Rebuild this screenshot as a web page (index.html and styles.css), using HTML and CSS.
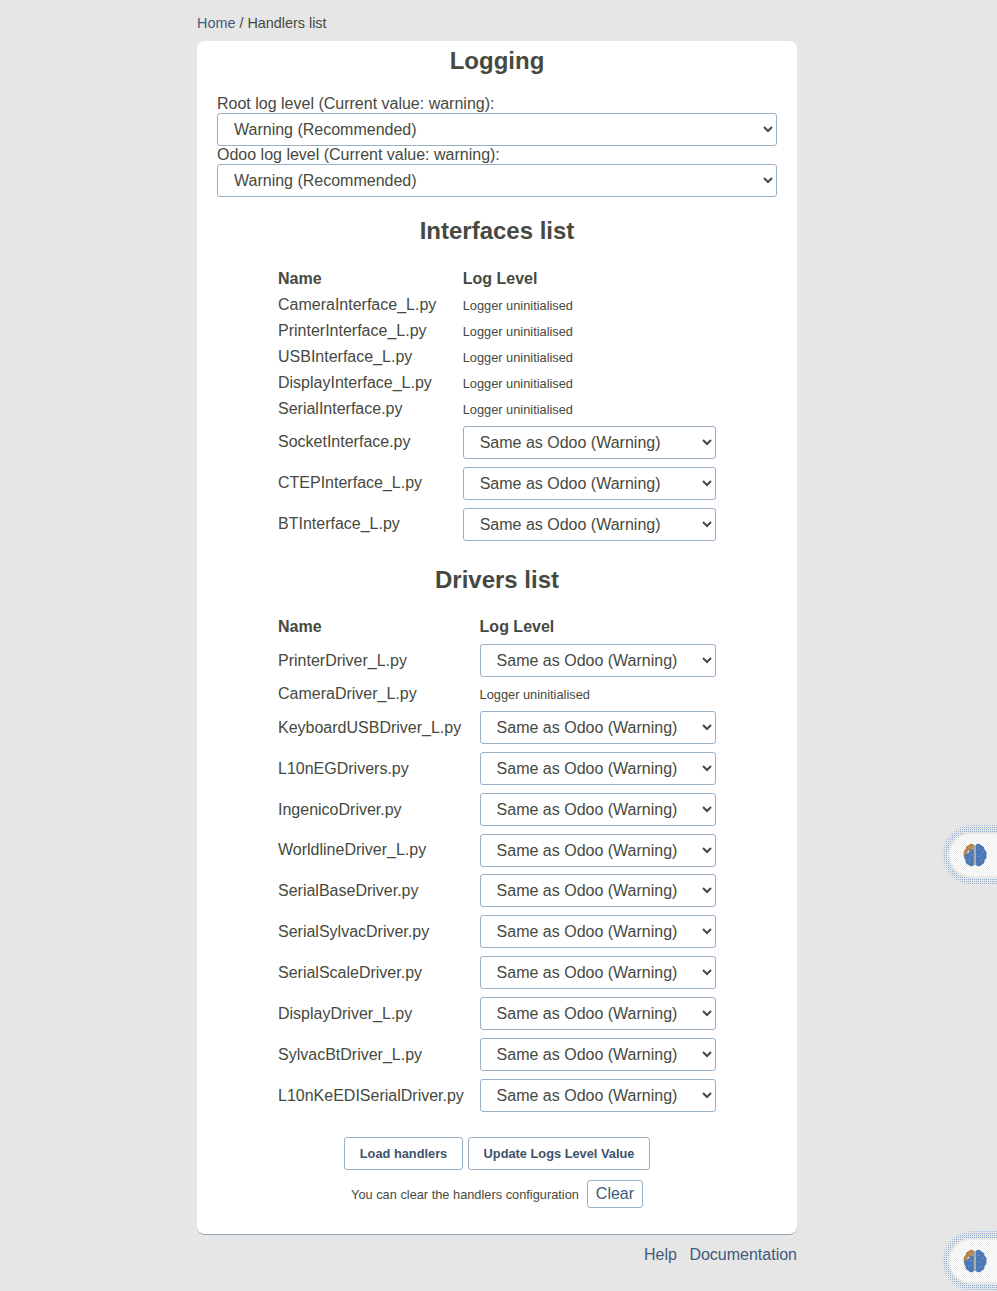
FILE: index.html
```
<!DOCTYPE html>
<html lang="en">
<head>
<meta charset="utf-8">
<title>Handlers list</title>
<link rel="stylesheet" href="styles.css">
</head>
<body>
<div class="page">
  <nav class="breadcrumb"><a href="#">Home</a> / Handlers list</nav>
  <main class="card">
    <h2 class="title">Logging</h2>
    <div class="field"><label for="root">Root log level (Current value: warning):</label><select id="root"><option>Warning (Recommended)</option></select></div>
    <div class="field"><label for="odoo">Odoo log level (Current value: warning):</label><select id="odoo"><option>Warning (Recommended)</option></select></div>
    <h2 class="title interfaces-title">Interfaces list</h2>
    <div class="list interfaces" id="interfaces"></div>
    <h2 class="title drivers-title">Drivers list</h2>
    <div class="list drivers" id="drivers"></div>
    <div class="actions"><button class="btn">Load handlers</button><button class="btn update">Update Logs Level Value</button></div>
    <div class="clear-row"><span>You can clear the handlers configuration</span><a class="clear" href="#">Clear</a></div>
  </main>
  <footer class="footer"><a href="#">Help</a><a href="#">Documentation</a></footer>
</div>
<svg class="defs" width="0" height="0" aria-hidden="true">
  <symbol id="brain" viewBox="0 0 24 24">
    <path fill="#b4814b" d="M10.800 1.700C9 .2 6.400.8 5.500 2.600 3.300 2.600 2.400 4.600 2.900 6 .8 7.200.2 9.500.8 11.300c-.4 1-.2 2 .5 2.800L4 12l1-4 3-1 3-3z"/>
    <path fill="#4c79b5" d="M10.900 3.500 10 6 6.500 7.300 5.300 10 1.300 12.600C.8 15 1.700 16.500 2.600 17.200 2 19.500 4 21.700 5.600 21.700 7 24 10 23.600 10.900 21.700z"/>
    <path fill="#4c79b5" d="M12.900 1.700c2-1.600 4.600-.7 5.400 1 2.200.2 3.500 2 3 3.700 2 1 3 3.600 2 5.500.8 2 0 4-1.800 5.100.3 2.400-1 4.300-3 4.700-1.200 2-4 2-5.600.3z"/>
    <path fill="#a3aaa9" d="M10.900 2h2v20h-2z"/>
    <path fill="none" stroke="#a7b8c9" stroke-width=".8" stroke-dasharray="1 1" d="M5 10 8 8.500M6.500 13 9 11M5.500 18l2-2M15 6l2 1.300M18 10l3-1.500M15 14l2-1.500M18 17l1.500 1"/>
    <path fill="none" stroke="#e0c19b" stroke-width=".8" stroke-dasharray="1 1" d="M6 5.200 9.500 3.500M2.500 10l2-2"/>
  </symbol>
</svg>
<div class="badge badge-upper"><div class="pill"><svg class="brain"><use href="#brain"/></svg></div></div>
<div class="badge badge-lower"><div class="pill"><svg class="brain"><use href="#brain"/></svg></div></div>
<script src="main.js"></script>
</body>
</html>
```
FILE: styles.css
```
* { box-sizing: border-box; }
body { margin: 0; height: 1291px; overflow: hidden; background: #e6e6e6; color: #464940; font: 16px/18px "Liberation Sans", Arial, sans-serif; position: relative; }
a { color: #425a7c; text-decoration: none; }
.page { width: 600px; margin-left: 197px; }
.breadcrumb { height: 41px; padding-top: 14px; font-size: 14.4px; }
.card { height: 1194px; padding: 6px 20px 0; background: #fff; border-radius: 8px; border-bottom: 1px solid #91a5b9; }
.title { height: 27px; margin: 0 0 21px; font-size: 24px; line-height: 27px; text-align: center; }
.field { height: 51px; }
.field label { display: block; height: 18px; }
select { display: block; width: 100%; height: 33px; margin: 0; padding: 6px 12px; border: 1px solid #9aafc2; border-radius: 3px; background: #fff; color: #464940; font: 16px "Liberation Sans", Arial, sans-serif; }
.interfaces-title { margin: 20px 0 22px; }
.list { width: 438px; margin-left: 61px; display: grid; align-items: center; }
.list b { line-height: 26px; }
.interfaces { grid-template-columns: 184.7px 253.3px; }
.drivers { grid-template-columns: 201.6px 236.4px; }
.plain { height: 26px; line-height: 26px; }
.note { font-size: 12.8px; padding-top: 1px; }
.name { height: 40.9px; line-height: 40px; }
.drivers .name { padding-top: 0.85px; }
.drivers-title { margin: 21px 0 21.4px; }
.actions { display: flex; justify-content: center; gap: 5px; margin-top: 21px; }
.btn { width: 119px; height: 33px; padding: 0; border: 1px solid #9aafc2; border-radius: 3px; background: #fff; color: #3d536c; font: bold 12.8px "Liberation Sans", Arial, sans-serif; }
.update { width: 182px; }
.clear-row { display: flex; justify-content: center; align-items: center; gap: 8px; margin-top: 10px; height: 28px; font-size: 12.8px; }
.clear-row span { padding-top: 2px; }
.clear { width: 56px; height: 28px; border: 1px solid #9aafc2; border-radius: 3px; line-height: 25px; text-align: center; font-size: 16px; }
.footer { display: flex; justify-content: flex-end; gap: 12.5px; padding-top: 11px; }
.defs { position: absolute; }
.badge { position: absolute; right: 0; width: 55px; height: 60px; padding: 7px 0 7px 6px; border-radius: 30px 0 0 30px; background: conic-gradient(#e6e6e6 75%, #8fa9c4 0) 0 0 / 2px 2px; box-shadow: inset 1px 0 3px #e6e6e6; }
.badge-upper { top: 825px; }
.badge-lower { top: 1231px; }
.pill { height: 46px; padding: 9px 0 0 13px; border: solid #e7e7e5; border-width: 2px 0 2px 2px; border-radius: 23px 0 0 23px; background: repeating-conic-gradient(#fff 0 25%, #ededeb 0 50%) 0 0 / 2px 2px; }
.brain { display: block; width: 24px; height: 24px; }
```
FILE: main.js
```
const note = "Logger uninitialised";
const level = "Same as Odoo (Warning)";

function fill(id, rows) {
  let html = "<b>Name</b><b>Log Level</b>";
  for (const [name, uninitialised] of rows) {
    html += uninitialised
      ? `<span class="plain">${name}</span><span class="plain note">${note}</span>`
      : `<span class="name">${name}</span><select aria-label="${name}"><option>${level}</option></select>`;
  }
  document.getElementById(id).innerHTML = html;
}

fill("interfaces", [
  ["CameraInterface_L.py", true],
  ["PrinterInterface_L.py", true],
  ["USBInterface_L.py", true],
  ["DisplayInterface_L.py", true],
  ["SerialInterface.py", true],
  ["SocketInterface.py"],
  ["CTEPInterface_L.py"],
  ["BTInterface_L.py"]
]);
fill("drivers", [
  ["PrinterDriver_L.py"],
  ["CameraDriver_L.py", true],
  ["KeyboardUSBDriver_L.py"],
  ["L10nEGDrivers.py"],
  ["IngenicoDriver.py"],
  ["WorldlineDriver_L.py"],
  ["SerialBaseDriver.py"],
  ["SerialSylvacDriver.py"],
  ["SerialScaleDriver.py"],
  ["DisplayDriver_L.py"],
  ["SylvacBtDriver_L.py"],
  ["L10nKeEDISerialDriver.py"]
]);
```
